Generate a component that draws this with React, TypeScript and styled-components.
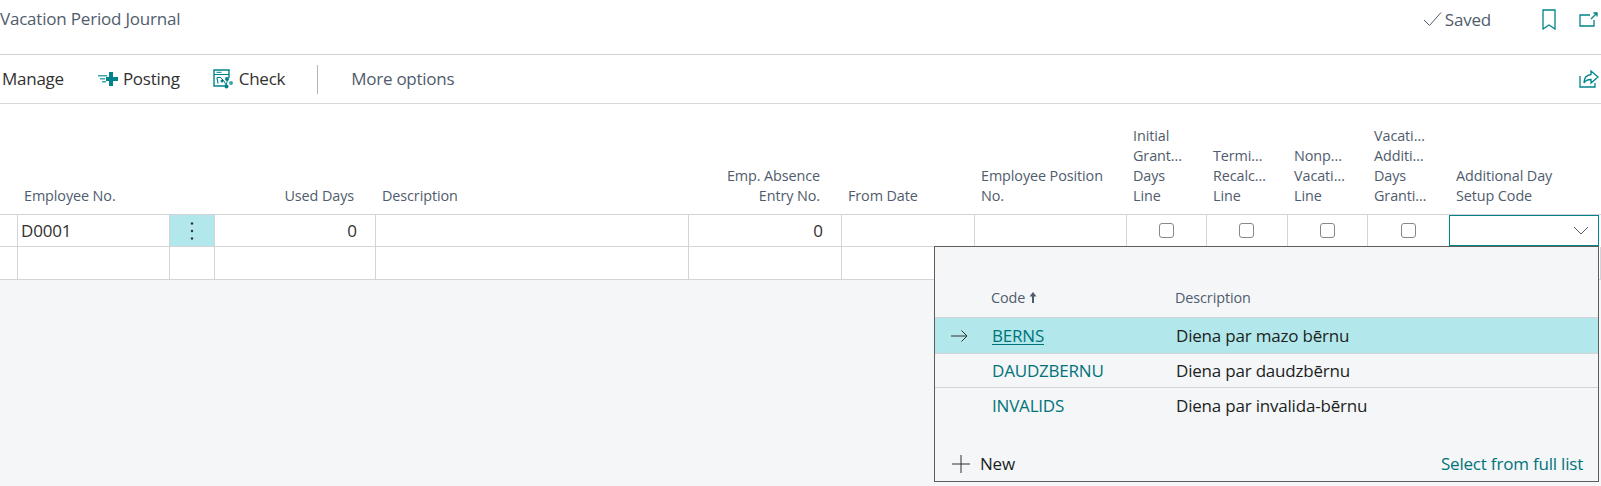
import React from "react";
import styled, { createGlobalStyle } from "styled-components";

const COLS = "18px 152px 45px 161px 313px 153px 133px 152px 80px 81px 80px 82px 151px";
const FONT = `"Open Sans", "Noto Sans", sans-serif`;

const Global = createGlobalStyle`
  html, body { margin: 0; padding: 0; background: #f5f6f8; }
  body { font-family: ${FONT}; width: 1601px; height: 486px; overflow: hidden; }
`;

const Page = styled.div`
  position: relative;
  width: 1601px;
  height: 486px;
  overflow: hidden;
  background: #f5f6f8;
`;

const TitleBar = styled.header`
  height: 55px;
  box-sizing: border-box;
  background: #fff;
  border-bottom: 1px solid #d1d1d6;
  display: flex;
  align-items: flex-start;
  justify-content: space-between;
  padding: 7px 3px 0 0;
`;
const Title = styled.h1`
  margin: 0;
  font-size: 17px;
  font-weight: 400;
  line-height: 24px;
  letter-spacing: -0.2px;
  color: #505c6d;
`;
const TitleActions = styled.div`
  display: flex;
  align-items: center;
  height: 24px;
`;
const Saved = styled.span`
  display: flex;
  align-items: center;
  gap: 3px;
  font-size: 17px;
  letter-spacing: -0.2px;
  color: #505c6d;
  margin-right: 51px;
`;
const BookmarkIcon = styled.svg`
  margin-right: 23px;
`;

const ActionBar = styled.nav`
  height: 49px;
  box-sizing: border-box;
  background: #fff;
  border-bottom: 1px solid #d8d8dc;
  display: flex;
  align-items: center;
  padding: 0 2px 0 2px;
`;
const ActionItem = styled.span<{ $muted?: boolean }>`
  display: inline-flex;
  align-items: center;
  gap: 5px;
  font-size: 17px;
  letter-spacing: -0.25px;
  line-height: 24px;
  color: ${(p) => (p.$muted ? "#505c6d" : "#323130")};
`;
const ActionItemGap = styled(ActionItem)<{ $left: number }>`
  margin-left: ${(p) => p.$left}px;
`;
const Divider = styled.span`
  width: 1px;
  height: 29px;
  background: #b3b3b8;
  margin-left: 32px;
  margin-right: 33px;
`;
const Spacer = styled.span`
  flex: 1;
`;

const Grid = styled.div`
  display: grid;
  grid-template-columns: ${COLS};
  background: #fff;
`;
const HeadCell = styled.div<{ $right?: boolean }>`
  height: 111px;
  box-sizing: border-box;
  border-bottom: 1px solid #d4d4d8;
  display: flex;
  flex-direction: column;
  justify-content: flex-end;
  text-align: ${(p) => (p.$right ? "right" : "left")};
  padding: 0 ${(p) => (p.$right ? "22px" : "0")} 8px ${(p) => (p.$right ? "0" : "6px")};
  font-size: 14.4px;
  line-height: 20px;
  letter-spacing: -0.1px;
  color: #505c6d;
  white-space: pre-line;
`;
const Cell = styled.div<{ $h: number }>`
  height: ${(p) => p.$h}px;
  box-sizing: border-box;
  border-right: 1px solid #d4d4d8;
  border-bottom: 1px solid #d4d4d8;
  display: flex;
  align-items: center;
  font-size: 17px;
  color: #323130;
`;
const TextCell = styled(Cell)`
  padding-left: 3px;
  letter-spacing: -0.2px;
`;
const NumCell = styled(Cell)`
  justify-content: flex-end;
  padding-right: 18px;
`;
const MoreCell = styled(Cell)`
  background: #b2e8eb;
  justify-content: center;
`;
const CheckCell = styled(Cell)`
  justify-content: center;
`;
const Check = styled.span`
  width: 15px;
  height: 15px;
  box-sizing: border-box;
  border: 1.5px solid #8a8886;
  border-radius: 3px;
  background: #fff;
  margin-left: -1px;
`;
const Input = styled.div`
  height: 31px;
  box-sizing: border-box;
  width: 150px;
  margin-left: -1px;
  border: 1px solid #008489;
  background: #fff;
  display: flex;
  align-items: center;
  justify-content: flex-end;
  padding-right: 9px;
`;

const Dropdown = styled.div`
  position: absolute;
  left: 934px;
  top: 246px;
  width: 665px;
  height: 236px;
  box-sizing: border-box;
  border: 1px solid #605e5c;
  background: #f5f6f8;
  display: flex;
  flex-direction: column;
`;
const ListGrid = styled.div`
  display: grid;
  grid-template-columns: 55px 184px 1fr;
  padding-top: 40px;
`;
const ListHead = styled.div`
  height: 30px;
  box-sizing: border-box;
  padding: 0 0 10px 1px;
  display: flex;
  align-items: center;
  gap: 4px;
  font-size: 14.4px;
  letter-spacing: -0.1px;
  color: #505c6d;
`;
const Row = styled.div<{ $selected?: boolean; $line?: boolean; $noTop?: boolean }>`
  grid-column: 1 / -1;
  display: grid;
  grid-template-columns: 55px 184px 1fr;
  align-items: center;
  height: ${(p) => (p.$selected ? 36 : 35)}px;
  box-sizing: border-box;
  background: ${(p) => (p.$selected ? "#b2e8eb" : "transparent")};
  border-top: ${(p) => (p.$noTop ? "none" : "1px solid #d4d4d8")};
  border-bottom: ${(p) => (p.$line ? "1px solid #d4d4d8" : "none")};
  font-size: 17px;
  letter-spacing: -0.2px;
`;
const Arrow = styled.span`
  display: flex;
  justify-content: flex-end;
  padding-right: 22px;
`;
const CodeLink = styled.span<{ $u?: boolean }>`
  color: #00737a;
  padding-left: 2px;
  text-decoration: ${(p) => (p.$u ? "underline" : "none")};
  text-decoration-thickness: 1px;
  text-underline-offset: 2px;
  justify-self: start;
`;
const Desc = styled.span`
  color: #201f1e;
  padding-left: 2px;
`;
const Footer = styled.div`
  margin-top: auto;
  height: 35px;
  display: flex;
  align-items: center;
  justify-content: space-between;
  padding: 0 15px 0 17px;
  font-size: 17px;
  letter-spacing: -0.2px;
`;
const NewButton = styled.span`
  display: flex;
  align-items: center;
  gap: 10px;
  color: #201f1e;
`;
const FullList = styled.span`
  color: #00737a;
`;

const TEAL = "#008489";

const headers: { t: string; right?: boolean }[] = [
  { t: "" },
  { t: "Employee No." },
  { t: "" },
  { t: "Used Days", right: true },
  { t: "Description" },
  { t: "Emp. Absence\nEntry No.", right: true },
  { t: "From Date" },
  { t: "Employee Position\nNo." },
  { t: "Initial\nGrant…\nDays\nLine" },
  { t: "Termi…\nRecalc…\nLine" },
  { t: "Nonp…\nVacati…\nLine" },
  { t: "Vacati…\nAdditi…\nDays\nGranti…" },
  { t: "Additional Day\nSetup Code" },
];

const Dots = () => (
  <svg width="4" height="22" viewBox="0 0 4 22">
    <circle cx="2" cy="3.5" r="1.2" fill="#323130" />
    <circle cx="2" cy="11" r="1.2" fill="#323130" />
    <circle cx="2" cy="18.5" r="1.2" fill="#323130" />
  </svg>
);

function DataRow({ h, first }: { h: number; first?: boolean }) {
  return (
    <>
      <Cell $h={h} />
      <TextCell $h={h}>{first ? "D0001" : ""}</TextCell>
      {first ? <MoreCell $h={h}><Dots /></MoreCell> : <Cell $h={h} />}
      <NumCell $h={h}>{first ? "0" : ""}</NumCell>
      <Cell $h={h} />
      <NumCell $h={h}>{first ? "0" : ""}</NumCell>
      <Cell $h={h} />
      <Cell $h={h} />
      {first ? (
        <>
          <CheckCell $h={h}><Check /></CheckCell>
          <CheckCell $h={h}><Check /></CheckCell>
          <CheckCell $h={h}><Check /></CheckCell>
          <CheckCell $h={h}><Check /></CheckCell>
          <Input>
            <svg width="16" height="9" viewBox="0 0 16 9" fill="none" stroke="#505c6d" strokeWidth="1">
              <path d="M1 1l7 7 7-7" />
            </svg>
          </Input>
        </>
      ) : (
        <>
          <Cell $h={h} />
          <Cell $h={h} />
          <Cell $h={h} />
          <Cell $h={h} />
          <Cell $h={h} />
        </>
      )}
    </>
  );
}

export default function App() {
  return (
    <Page>
      <Global />
      <TitleBar>
        <Title>Vacation Period Journal</Title>
        <TitleActions>
          <Saved>
            <svg width="19" height="16" viewBox="0 0 19 16" fill="none" stroke="#505c6d" strokeWidth="1">
              <path d="M1 9l5.5 5.5L18 1.5" />
            </svg>
            Saved
          </Saved>
          <BookmarkIcon width="14" height="21" viewBox="0 0 14 21" fill="none" stroke={TEAL} strokeWidth="1.3">
            <path d="M1 1h12v19l-6-4-6 4z" />
          </BookmarkIcon>
          <svg width="19" height="15" viewBox="0 0 19 15" fill="none" stroke={TEAL} strokeWidth="1.3">
            <path d="M11 3H1v11h14V8" />
            <path d="M12 7l6-6M14.5 1H18v3.5" />
          </svg>
        </TitleActions>
      </TitleBar>
      <ActionBar>
        <ActionItem>Manage</ActionItem>
        <ActionItemGap $left={34}>
          <svg width="20" height="16" viewBox="0 0 20 16">
            <path d="M11 1h4v5h5v4h-5v5h-4v-5H8V6h3z" fill={TEAL} />
            <path d="M0 4h9v1.5H0zM2 7h5v1.5H2zM4 10h4v1.5H4z" fill="#3aa5aa" />
          </svg>
          Posting
        </ActionItemGap>
        <ActionItemGap $left={33}>
          <svg width="21" height="20" viewBox="0 0 21 20" fill="none" stroke={TEAL}>
            <path d="M15 17H1V1h15v8" strokeWidth="1.4" />
            <path d="M1 5.5h15" strokeWidth="1" />
            <path d="M3.5 3.3h5" strokeWidth="1" />
            <path d="M4 8.5l1 6M4 8.5h4" strokeWidth="1.2" />
            <path d="M8 9l3 3 2 4 2-6" strokeWidth="1" />
            <circle cx="14" cy="10" r="2" fill={TEAL} stroke="none" />
            <circle cx="18" cy="14" r="2" fill="#3aa5aa" stroke="none" />
            <circle cx="13.5" cy="17.5" r="2" fill={TEAL} stroke="none" />
            <circle cx="9" cy="12" r="1.5" fill={TEAL} stroke="none" />
          </svg>
          Check
        </ActionItemGap>
        <Divider />
        <ActionItem $muted>More options</ActionItem>
        <Spacer />
        <svg width="20" height="18" viewBox="0 0 20 18" fill="none" stroke={TEAL} strokeWidth="1.3">
          <path d="M1 6v11h15v-4" />
          <path d="M12 1l7 6-7 6V9.5C8 9.5 6 11 5 13c0-5 3-8 7-8.5z" />
        </svg>
      </ActionBar>
      <Grid>
        {headers.map((h, i) => (
          <HeadCell key={i} $right={h.right}>{h.t}</HeadCell>
        ))}
        <DataRow h={32} first />
        <DataRow h={33} />
      </Grid>
      <Dropdown>
        <ListGrid>
          <span />
          <ListHead>
            Code
            <svg width="8" height="11" viewBox="0 0 8 11" fill="#505c6d">
              <path d="M4 0l3.5 4.5H5V11H3V4.5H.5z" />
            </svg>
          </ListHead>
          <ListHead>Description</ListHead>
          <Row $selected>
            <Arrow>
              <svg width="17" height="12" viewBox="0 0 17 12" fill="none" stroke="#323130" strokeWidth="1">
                <path d="M0 6h16M10.5 .5L16 6l-5.5 5.5" />
              </svg>
            </Arrow>
            <CodeLink $u>BERNS</CodeLink>
            <Desc>Diena par mazo bērnu</Desc>
          </Row>
          <Row $line>
            <span />
            <CodeLink>DAUDZBERNU</CodeLink>
            <Desc>Diena par daudzbērnu</Desc>
          </Row>
          <Row $noTop>
            <span />
            <CodeLink>INVALIDS</CodeLink>
            <Desc>Diena par invalida-bērnu</Desc>
          </Row>
        </ListGrid>
        <Footer>
          <NewButton>
            <svg width="18" height="18" viewBox="0 0 18 18" stroke="#323130" strokeWidth="1">
              <path d="M9 0v18M0 9h18" />
            </svg>
            New
          </NewButton>
          <FullList>Select from full list</FullList>
        </Footer>
      </Dropdown>
    </Page>
  );
}
